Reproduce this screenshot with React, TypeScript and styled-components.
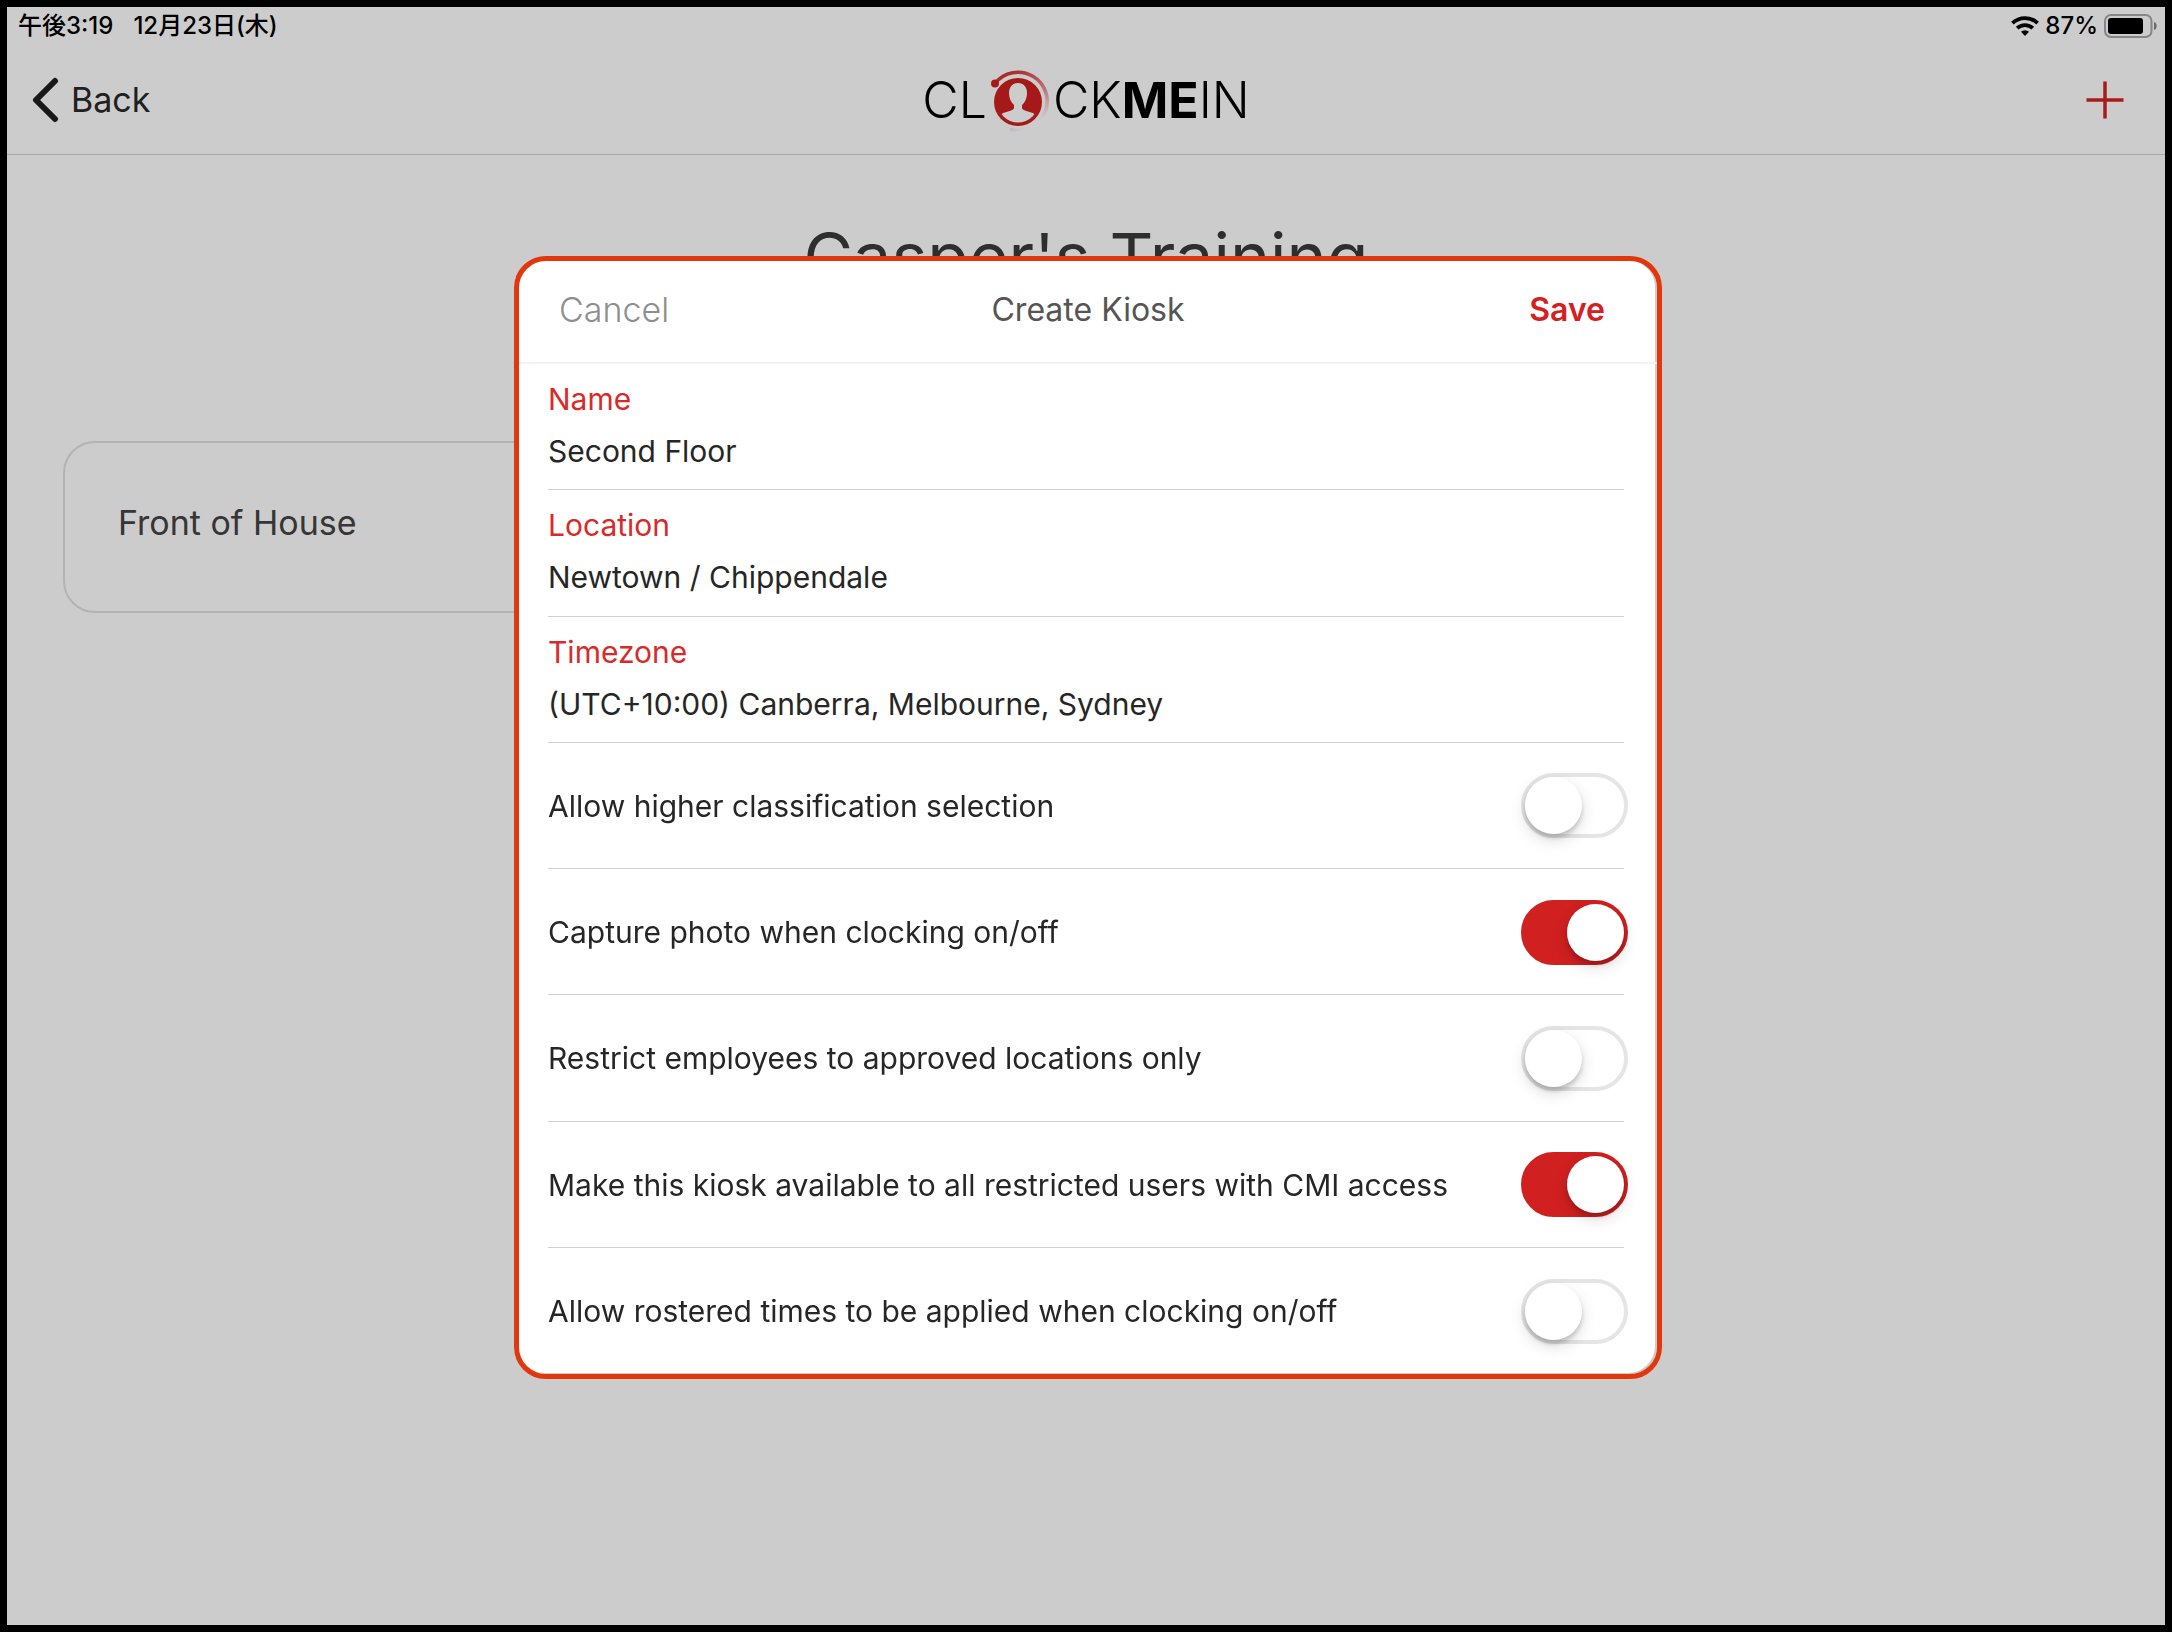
import React, { useId, useState } from "react";
import styled, { createGlobalStyle } from "styled-components";

const GlobalStyle = createGlobalStyle`
  *, *::before, *::after { box-sizing: border-box; }
  body {
    margin: 0;
    background: #000;
    font-family: Inter, "Noto Sans CJK JP", "Liberation Sans", sans-serif;
    font-weight: 400;
  }
  button, input, select { font: inherit; color: inherit; }
`;

const Bezel = styled.div`
  display: flex;
  min-height: 100vh;
  padding: 7px;
  background: #000;
`;

const Screen = styled.div`
  flex: 1;
  display: flex;
  flex-direction: column;
  background: #fff;
`;

const StatusBar = styled.div`
  display: flex;
  justify-content: space-between;
  align-items: center;
  height: 38px;
  padding: 0 7px 0 11px;
  font-size: 24px;
  line-height: 32px;
  font-weight: 500;
  color: #000;
`;

const StatusGroup = styled.div<{ $gap: number }>`
  display: flex;
  align-items: center;
  gap: ${(p) => p.$gap}px;
`;

const NavBar = styled.header`
  display: grid;
  grid-template-columns: 1fr auto 1fr;
  align-items: center;
  height: 110px;
  padding: 0 24px;
  border-bottom: 1px solid #d2d2d2;
`;

const PlainButton = styled.button`
  border: 0;
  padding: 0;
  background: none;
  cursor: pointer;
`;

const BackButton = styled(PlainButton)`
  justify-self: start;
  display: flex;
  align-items: center;
  gap: 10px;
  font-size: 34px;
  line-height: 44px;
  color: #282828;
`;

const AddButton = styled(PlainButton)`
  justify-self: end;
  display: flex;
  padding-right: 17px;
`;

const Logo = styled.div`
  display: flex;
  align-items: center;
  font-size: 50px;
  line-height: 60px;
  font-weight: 300;
  color: #000;

  svg { display: block; }
  b { font-weight: 700; }
`;

const Main = styled.main`
  flex: 1;
  padding: 62px 56px;
`;

const Title = styled.h1`
  margin: 0;
  text-align: center;
  font-size: 68px;
  line-height: 80px;
  font-weight: 400;
  color: #3a3a3a;
`;

const KioskGrid = styled.div`
  display: grid;
  grid-template-columns: 1fr 1fr;
  gap: 56px;
  margin-top: 144px;
`;

const KioskCard = styled(PlainButton)`
  height: 172px;
  padding: 0 53px 8px;
  border: 2px solid #e0e0e0;
  border-radius: 32px;
  text-align: left;
  font-size: 34px;
  line-height: 44px;
  color: #444;
`;

const Scrim = styled.div`
  position: fixed;
  inset: 7px;
  display: flex;
  align-items: center;
  justify-content: center;
  padding: 3px 0 0 4px;
  background: rgba(0, 0, 0, 0.2);
`;

const Dialog = styled.section`
  width: 1148px;
  max-width: 100%;
  border: 5px solid #e0370d;
  border-radius: 32px;
  background: #fff;
  box-shadow: inset -2px -1px 0 #ccc;
`;

const DialogHeader = styled.div`
  display: grid;
  grid-template-columns: 1fr auto 1fr;
  align-items: center;
  height: 103px;
  padding: 0 40px 4px;
  border-bottom: 2px solid #f3f3f3;
  font-size: 34px;
  line-height: 44px;
`;

const DialogTitle = styled.h2`
  margin: 0;
  font-size: 32px;
  font-weight: 400;
  color: #555;
`;

const CancelButton = styled(PlainButton)`
  justify-self: start;
  font-weight: 300;
  color: #8e8e8e;
`;

const SaveButton = styled(PlainButton)`
  justify-self: end;
  padding-right: 12px;
  font-size: 32px;
  font-weight: 600;
  color: #d42020;
`;

const Rows = styled.form`
  display: grid;
  grid-auto-rows: 1fr;
  min-height: 1010px;
  padding: 0 33px 0 29px;
  font-size: 30px;
  line-height: 40px;
  color: #262626;
`;

const Row = styled.div`
  border-bottom: 1px solid #d0d0d0;

  &:last-child { border-bottom: 0; }
`;

const FieldRow = styled(Row)`
  display: flex;
  flex-direction: column;
  gap: 12px;
  padding-top: 15px;
`;

const FieldLabel = styled.label`
  color: #d92a2a;
`;

const TextBox = styled.input`
  width: 100%;
  height: 40px;
  padding: 0;
  border: 0;
  outline: 0;
  background: none;
`;

const Picker = styled.select`
  appearance: none;
  width: 100%;
  height: 40px;
  padding: 0;
  border: 0;
  outline: 0;
  background: none;
`;

const SwitchRow = styled(Row)`
  display: flex;
  align-items: center;
  justify-content: space-between;
  padding-top: 1px;
`;

const Switch = styled.input`
  appearance: none;
  display: flex;
  flex: none;
  width: 107px;
  height: 65px;
  margin: 0 -4px 0 0;
  border: 4px solid #e5e5e5;
  border-radius: 33px;
  background: #fff;
  cursor: pointer;

  &::before {
    content: "";
    width: 57px;
    height: 57px;
    border-radius: 50%;
    background: #fff;
    box-shadow: 0 6px 16px rgba(0, 0, 0, 0.14), 0 4px 4px rgba(0, 0, 0, 0.16);
  }

  &:checked {
    border-color: #d02020;
    background: #d02020;
  }

  &:checked::before { margin-left: 42px; }
`;

function WifiIcon() {
  return (
    <svg width="28" height="20" viewBox="0 0 28 20" aria-hidden="true">
      <g fill="none" stroke="#000" strokeWidth="3.8">
        <path d="M1.4 7.2A18 18 0 0 1 26.6 7.2" />
        <path d="M6.2 12.2A11.2 11.2 0 0 1 21.8 12.2" />
      </g>
      <path d="M14 20l-4-4.2a5.8 5.8 0 0 1 8 0z" fill="#000" />
    </svg>
  );
}

function BatteryIcon() {
  return (
    <svg width="54" height="24" viewBox="0 0 54 24" aria-hidden="true">
      <rect x="1" y="1" width="46.500" height="22" rx="6" fill="none" stroke="#a8a8a8" strokeWidth="2" />
      <rect x="4" y="4" width="35" height="16" rx="3" fill="#000" />
      <path d="M50 8c3.600 1 3.600 7 0 8z" fill="#888" />
    </svg>
  );
}

function ChevronIcon() {
  return (
    <svg width="30" height="46" viewBox="0 0 30 46" aria-hidden="true">
      <path d="M24 4L5 23l19 19" fill="none" stroke="#202020" strokeWidth="6" strokeLinecap="round" strokeLinejoin="round" />
    </svg>
  );
}

function PlusIcon() {
  return (
    <svg width="38" height="38" viewBox="0 0 38 38" aria-hidden="true">
      <path d="M19 0.500v37M0.500 19h37" stroke="#d42222" strokeWidth="3.500" />
    </svg>
  );
}

function LogoMark() {
  return (
    <svg width="66" height="68" viewBox="3 -1 66 68" aria-hidden="true">
      <defs>
        <linearGradient id="sweep" x1="0" y1="0" x2="0.5" y2="1">
          <stop offset="0" stopColor="#d02020" />
          <stop offset="0.6" stopColor="#d02020" stopOpacity="0.5" />
          <stop offset="1" stopColor="#d02020" stopOpacity="0" />
        </linearGradient>
        <clipPath id="disc">
          <circle cx="34" cy="35" r="20.500" />
        </clipPath>
      </defs>
      <path d="M11 16.500A29.200 29.200 0 1 1 26 62.500" fill="none" stroke="url(#sweep)" strokeWidth="3.600" />
      <circle cx="11" cy="16.500" r="4" fill="#d02020" />
      <circle cx="34" cy="35" r="24" fill="#d02020" />
      <path
        d="M34 16c-6 0-9 4.500-9 10 0 5 2 9.500 5 12v3c0 3-11 3.500-14.500 7.500C19 53.500 26 56 34 56s15-2.500 18.500-7.500C49 44.500 38 44 38 41v-3c3-2.500 5-7 5-12 0-5.500-3-10-9-10z"
        fill="#fff"
        clipPath="url(#disc)"
      />
    </svg>
  );
}

type FieldProps = { label: string; children: (id: string) => React.ReactNode };

function Field({ label, children }: FieldProps) {
  const id = useId();
  return (
    <FieldRow>
      <FieldLabel htmlFor={id}>{label}</FieldLabel>
      {children(id)}
    </FieldRow>
  );
}

function Toggle({ label, initial }: { label: string; initial: boolean }) {
  const id = useId();
  const [on, setOn] = useState(initial);
  return (
    <SwitchRow>
      <label htmlFor={id}>{label}</label>
      <Switch id={id} type="checkbox" role="switch" checked={on} onChange={(e) => setOn(e.target.checked)} />
    </SwitchRow>
  );
}

const toggles = [
  { label: "Allow higher classification selection", initial: false },
  { label: "Capture photo when clocking on/off", initial: true },
  { label: "Restrict employees to approved locations only", initial: false },
  { label: "Make this kiosk available to all restricted users with CMI access", initial: true },
  { label: "Allow rostered times to be applied when clocking on/off", initial: false },
];

export default function App() {
  const [name, setName] = useState("Second Floor");

  return (
    <>
      <GlobalStyle />
      <Bezel>
        <Screen>
          <StatusBar>
            <StatusGroup $gap={20}>
              <span>午後3:19</span>
              <span>12月23日(木)</span>
            </StatusGroup>
            <StatusGroup $gap={6}>
              <WifiIcon />
              <span>87%</span>
              <BatteryIcon />
            </StatusGroup>
          </StatusBar>
          <NavBar>
            <BackButton type="button">
              <ChevronIcon />
              Back
            </BackButton>
            <Logo>
              <span>CL</span>
              <LogoMark />
              <span>CK</span>
              <b>ME</b>
              <span>IN</span>
            </Logo>
            <AddButton type="button" aria-label="Add kiosk">
              <PlusIcon />
            </AddButton>
          </NavBar>
          <Main>
            <Title>Casper's Training</Title>
            <KioskGrid>
              <KioskCard type="button">Front of House</KioskCard>
            </KioskGrid>
          </Main>
        </Screen>
      </Bezel>
      <Scrim>
        <Dialog role="dialog" aria-modal="true" aria-labelledby="dialog-title">
          <DialogHeader>
            <CancelButton type="button">Cancel</CancelButton>
            <DialogTitle id="dialog-title">Create Kiosk</DialogTitle>
            <SaveButton type="submit" form="kiosk-form">Save</SaveButton>
          </DialogHeader>
          <Rows id="kiosk-form" onSubmit={(e) => e.preventDefault()}>
            <Field label="Name">
              {(id) => <TextBox id={id} type="text" value={name} onChange={(e) => setName(e.target.value)} />}
            </Field>
            <Field label="Location">
              {(id) => (
                <Picker id={id}>
                  <option>Newtown / Chippendale</option>
                </Picker>
              )}
            </Field>
            <Field label="Timezone">
              {(id) => (
                <Picker id={id}>
                  <option>(UTC+10:00) Canberra, Melbourne, Sydney</option>
                </Picker>
              )}
            </Field>
            {toggles.map((t) => (
              <Toggle key={t.label} {...t} />
            ))}
          </Rows>
        </Dialog>
      </Scrim>
    </>
  );
}
